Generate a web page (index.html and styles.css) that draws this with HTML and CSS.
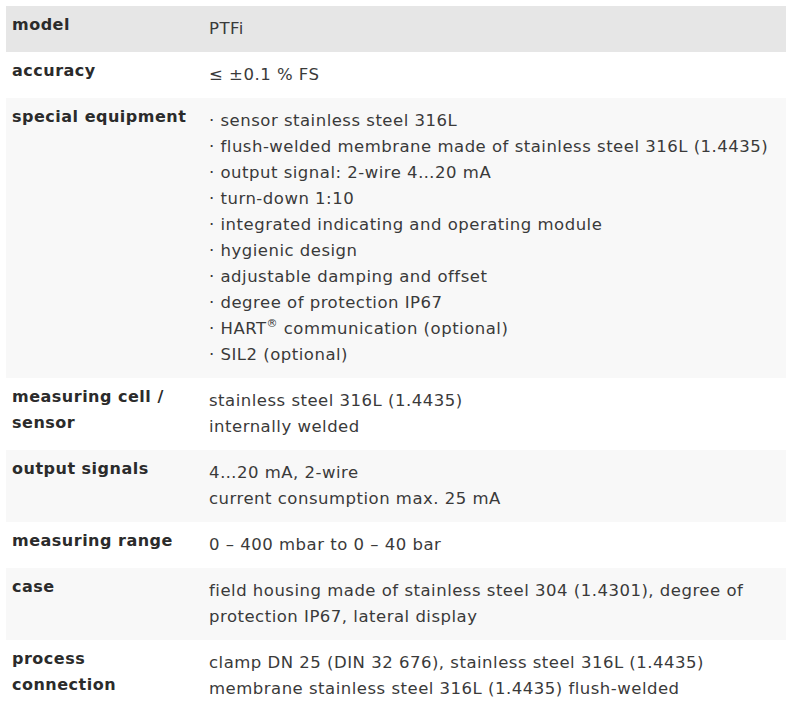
FILE: index.html
```html
<!DOCTYPE html>
<html lang="en">
<head>
<meta charset="utf-8">
<title>PTFi</title>
<link rel="stylesheet" href="styles.css">
</head>
<body>
<table class="specs">
  <tbody>
    <tr class="row-head">
      <th>model</th>
      <td>PTFi</td>
    </tr>
    <tr class="row-white">
      <th>accuracy</th>
      <td>≤ ±0.1 % FS</td>
    </tr>
    <tr class="row-light">
      <th>special equipment</th>
      <td>
        · sensor stainless steel 316L<br>
        · flush-welded membrane made of stainless steel 316L (1.4435)<br>
        · output signal: 2-wire 4…20 mA<br>
        · turn-down 1:10<br>
        · integrated indicating and operating module<br>
        · hygienic design<br>
        · adjustable damping and offset<br>
        · degree of protection IP67<br>
        · HART<sup>®</sup> communication (optional)<br>
        · SIL2 (optional)
      </td>
    </tr>
    <tr class="row-white">
      <th>measuring cell / sensor</th>
      <td>stainless steel 316L (1.4435)<br>internally welded</td>
    </tr>
    <tr class="row-light">
      <th>output signals</th>
      <td>4…20 mA, 2-wire<br>current consumption max. 25 mA</td>
    </tr>
    <tr class="row-white">
      <th>measuring range</th>
      <td>0 – 400 mbar to 0 – 40 bar</td>
    </tr>
    <tr class="row-light">
      <th>case</th>
      <td>field housing made of stainless steel 304 (1.4301), degree of protection IP67, lateral display</td>
    </tr>
    <tr class="row-white">
      <th>process connection</th>
      <td>clamp DN 25 (DIN 32 676), stainless steel 316L (1.4435)<br>membrane stainless steel 316L (1.4435) flush-welded</td>
    </tr>
  </tbody>
</table>
</body>
</html>
```

FILE: styles.css
```css
html, body {
  background: #ffffff;
}

body {
  margin: 6px 0 0 6px;
  font-family: "DejaVu Sans", sans-serif;
  color: #3a3a3a;
}

.specs {
  width: 780px;
  border-collapse: collapse;
  table-layout: fixed;
}

.specs th {
  width: 178px;
  text-align: left;
  vertical-align: top;
  font-size: 16px;
  letter-spacing: 0.5px;
  font-weight: bold;
  line-height: 26px;
  color: #2b2b2b;
  padding: 6px 13px 13px 6px;
}

.specs td {
  vertical-align: top;
  font-size: 16.5px;
  letter-spacing: 0.5px;
  line-height: 26px;
  padding: 10px 6px 10px 6px;
}

.specs sup {
  font-size: 11px;
  line-height: 0;
  vertical-align: 7px;
}

.row-head {
  background: #e6e6e6;
}

.row-white {
  background: #ffffff;
}

.row-light {
  background: #f8f8f8;
}
```
